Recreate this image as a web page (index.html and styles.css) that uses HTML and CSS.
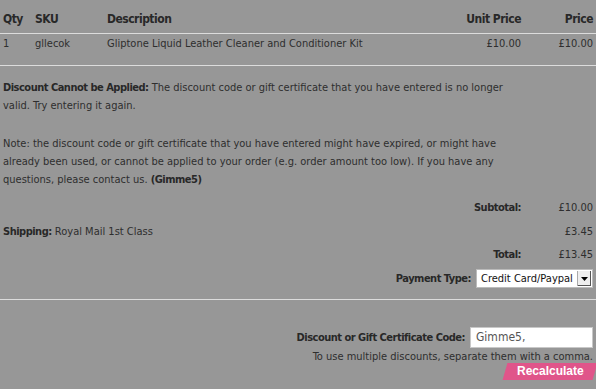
FILE: index.html
```html
<!DOCTYPE html>
<html lang="en">

<head>
    <meta charset="UTF-8" />
    <title>Shopping Cart</title>
    <link rel="stylesheet" href="styles.css">
</head>

<body>
    <table class="items">
        <thead>
            <tr>
                <th class="qty">Qty</th>
                <th class="sku">SKU</th>
                <th class="desc">Description</th>
                <th class="num">Unit Price</th>
                <th class="num price">Price</th>
            </tr>
        </thead>
        <tbody>
            <tr>
                <td class="qty">1</td>
                <td class="sku">gllecok</td>
                <td class="desc">Gliptone Liquid Leather Cleaner and Conditioner Kit</td>
                <td class="num">£10.00</td>
                <td class="num price">£10.00</td>
            </tr>
        </tbody>
    </table>

    <div class="notice">
        <p><b>Discount Cannot be Applied:</b> The discount code or gift certificate that you have entered is no longer valid. Try entering it again.</p>
        <p>Note: the discount code or gift certificate that you have entered might have expired, or might have already been used, or cannot be applied to your order (e.g. order amount too low). If you have any questions, please contact us. <b>(Gimme5)</b></p>
    </div>

    <div class="totals">
        <div class="row">
            <span class="label"><b>Subtotal:</b></span>
            <span class="value">£10.00</span>
        </div>
        <div class="row">
            <span class="label ship"><b>Shipping:</b> Royal Mail 1st Class</span>
            <span class="value">£3.45</span>
        </div>
        <div class="row">
            <span class="label"><b>Total:</b></span>
            <span class="value">£13.45</span>
        </div>
        <div class="payment">
            <b>Payment Type:</b>
            <div class="select">
                <span>Credit Card/Paypal</span>
                <span class="arrow">
                    <svg width="7" height="4" viewBox="0 0 7 4"><path d="M0 0h7L3.5 4z" fill="#000"/></svg>
                </span>
            </div>
        </div>
    </div>

    <div class="discount">
        <div class="code">
            <b>Discount or Gift Certificate Code:</b>
            <div class="input">Gimme5,</div>
        </div>
        <div class="hint">To use multiple discounts, separate them with a comma.</div>
        <div class="btn"><span>Recalculate</span></div>
    </div>
</body>

</html>
```

FILE: styles.css
```css
body {
    margin: 0;
    background: #979797;
    color: #2e2e2e;
    font-family: "DejaVu Sans Condensed", "DejaVu Sans", sans-serif;
    font-stretch: condensed;
    font-size: 11px;
    width: 596px;
    height: 389px;
    overflow: hidden;
}

b {
    color: #282828;
    letter-spacing: -0.5px;
}

.items {
    width: 596px;
    border-collapse: collapse;
}

.items th {
    font-size: 12px;
    font-weight: bold;
    letter-spacing: -0.5px;
    text-align: left;
    height: 29px;
    padding: 4px 0 0;
    border-bottom: 1px solid #dcdcdc;
    color: #282828;
}

.items td {
    height: 28px;
    padding: 3px 0 0;
    vertical-align: top;
    border-bottom: 1px solid #dcdcdc;
}

.qty {
    width: 32px;
    padding-left: 3px !important;
}

.sku {
    width: 72px;
}

.num {
    text-align: right !important;
}

.price {
    width: 72px;
    padding-right: 3px !important;
}

.notice {
    padding: 13px 80px 0 3px;
    line-height: 18px;
}

.notice p {
    margin: 0 0 20px;
}

.notice p:last-child {
    margin-bottom: 0;
}

.totals {
    margin-top: 7px;
    padding-bottom: 8px;
    border-bottom: 1px solid #dcdcdc;
}

.row {
    display: flex;
    height: 23.5px;
    align-items: center;
}

.label {
    flex: 1;
    text-align: right;
}

.label.ship {
    text-align: left;
    padding-left: 3px;
}

.value {
    width: 72px;
    text-align: right;
    padding-right: 3px;
}

.payment {
    display: flex;
    justify-content: flex-end;
    align-items: center;
    gap: 5px;
    padding-right: 3px;
    height: 24px;
}

.select {
    display: flex;
    align-items: center;
    width: 115px;
    height: 17px;
    background: #fff;
    border: 1px solid #bbb;
    color: #111;
}

.select span:first-child {
    flex: 1;
    padding-left: 4px;
}

.arrow {
    width: 13px;
    height: 15px;
    margin-right: 1px;
    display: flex;
    align-items: center;
    justify-content: center;
    background: #eee;
    border-left: 1px solid #aaa;
    box-shadow: inset -1px -1px 0 #555;
}

.discount {
    display: flex;
    flex-direction: column;
    align-items: flex-end;
    padding: 27px 3px 0 0;
}

.code {
    display: flex;
    align-items: center;
    gap: 5px;
}

.input {
    width: 116px;
    height: 19px;
    line-height: 19px;
    padding-left: 5px;
    background: #fff;
    border: 1px solid #c8c8c8;
    font-size: 12px;
    color: #555;
}

.hint {
    margin-top: 2px;
    line-height: 14px;
}

.btn {
    margin: -1px -2px 0 0;
    width: 90px;
    height: 17px;
    line-height: 17px;
    text-align: center;
    background: #e0558a;
    transform: skewX(-16deg);
}

.btn span {
    display: inline-block;
    transform: skewX(16deg);
    color: #fff;
    font-family: "Liberation Sans", Arial, sans-serif;
    font-stretch: normal;
    font-weight: bold;
    font-size: 12px;
}
```
